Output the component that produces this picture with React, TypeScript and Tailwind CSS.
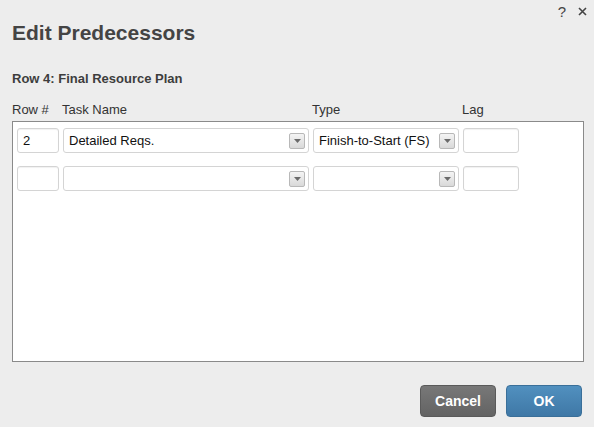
import React from "react";

function Field({ w, value = "" }: { w: string; value?: string }) {
  return (
    <div className={`${w} h-[25px] rounded-[3px] border border-[#d4d4d4] bg-white shadow-[inset_0_1px_1px_rgba(0,0,0,0.06)] flex items-center px-[5px] text-[13px] text-[#111]`}>
      {value}
    </div>
  );
}

function Select({ w, value = "" }: { w: string; value?: string }) {
  return (
    <div className={`${w} h-[25px] rounded-[3px] border border-[#d4d4d4] bg-white flex items-center pl-[5px] pr-[3px] text-[13px] text-[#111]`}>
      <span className="flex-1 truncate">{value}</span>
      <span className="w-[16px] h-[16px] rounded-[2px] border border-[#b8b8b8] bg-gradient-to-b from-[#f4f4f4] to-[#d9d9d9] flex items-center justify-center">
        <svg width="7" height="4" viewBox="0 0 7 4">
          <path d="M0 0h7L3.5 4z" fill="#6a6a6a" />
        </svg>
      </span>
    </div>
  );
}

function Row({ num, task, type }: { num?: string; task?: string; type?: string }) {
  return (
    <div className="flex gap-[4px]">
      <Field w="w-[42px]" value={num} />
      <Select w="w-[246px]" value={task} />
      <Select w="w-[146px]" value={type} />
      <Field w="w-[56px]" />
    </div>
  );
}

export default function App() {
  return (
    <div className="w-[594px] h-[427px] bg-[#ededed] font-['Liberation_Sans',Arial,sans-serif] text-[#3d3d3d] flex flex-col">
      <div className="flex justify-end items-center gap-[12px] pr-[7px] pt-[3px] h-[20px] text-[#444]">
        <span className="text-[15px] leading-none">?</span>
        <svg width="9" height="9" viewBox="0 0 9 9">
          <path d="M1 1l7 7M8 1l-7 7" stroke="#444" strokeWidth="1.6" />
        </svg>
      </div>
      <div className="pl-[12px] pr-[10px]">
        <h1 className="text-[21px] font-bold leading-[24px] mt-[1px] text-[#444]">Edit Predecessors</h1>
        <p className="text-[13px] font-bold mt-[27px] leading-[14px] text-[#3d3d3d]">Row 4: Final Resource Plan</p>
        <div className="flex text-[13px] mt-[16px] leading-[15px] text-[#333]">
          <span className="w-[50px]">Row #</span>
          <span className="w-[250px]">Task Name</span>
          <span className="w-[150px]">Type</span>
          <span>Lag</span>
        </div>
        <div className="mt-[4px] h-[241px] border border-[#8a8a8a] bg-white pt-[6px] pl-[4px] flex flex-col gap-[13px]">
          <Row num="2" task="Detailed Reqs." type="Finish-to-Start (FS)" />
          <Row />
        </div>
        <div className="flex justify-end gap-[10px] mt-[23px] pr-[2px]">
          <button className="w-[76px] h-[32px] rounded-[4px] bg-gradient-to-b from-[#787878] to-[#636363] border border-[#5a5a5a] text-white text-[14px] font-bold">Cancel</button>
          <button className="w-[76px] h-[32px] rounded-[4px] bg-gradient-to-b from-[#5190bf] to-[#3f78a6] border border-[#3a6f99] text-white text-[14px] font-bold">OK</button>
        </div>
      </div>
    </div>
  );
}
